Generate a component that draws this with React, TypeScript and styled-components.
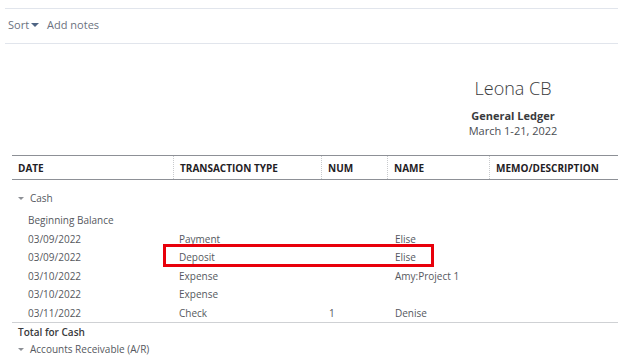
import React from "react";
import styled, { createGlobalStyle } from "styled-components";

const Global = createGlobalStyle`
  html, body { margin: 0; padding: 0; background: #fff; overflow: hidden; }
  body { font-family: "Open Sans", "Noto Sans", sans-serif; color: #393a3d; }
`;

const Page = styled.div`
  width: 618px;
  height: 359px;
  overflow: hidden;
  padding-top: 8px;
  box-sizing: border-box;
`;

const Toolbar = styled.div`
  margin-left: 5px;
  border-top: 1px solid #e1e5ec;
  border-bottom: 1px solid #e1e5ec;
  display: flex;
  align-items: center;
  gap: 8px;
  padding: 0 0 4px 3px;
  height: 30px;
  font-size: 11px;
  color: #6b7280;
`;

const SortButton = styled.span`
  display: inline-flex;
  align-items: center;
  gap: 2px;
`;

const Caret = styled.span`
  width: 0;
  height: 0;
  border-left: 4px solid transparent;
  border-right: 4px solid transparent;
  border-top: 4px solid #4f6584;
  margin-top: 1px;
`;

const ReportHead = styled.div`
  display: flex;
  justify-content: flex-end;
  padding-right: 5px;
  margin-top: 32px;
`;

const HeadBlock = styled.div`
  width: 200px;
  text-align: center;
`;

const Company = styled.div`
  font-size: 18px;
  font-weight: 300;
  color: #393a3d;
  line-height: 24px;
`;

const ReportName = styled.div`
  margin-top: 8px;
  font-size: 11px;
  font-weight: 700;
  color: #393a3d;
  line-height: 15px;
`;

const Period = styled.div`
  font-size: 11px;
  color: #4a4d52;
  line-height: 15px;
`;

const Table = styled.div`
  margin: 17px 0 0 12px;
`;

const cols = "161px 148px 66px 102px 1fr";

const HeaderRow = styled.div`
  display: grid;
  grid-template-columns: ${cols};
  border-top: 1px solid #8d9096;
  border-bottom: 1px solid #8d9096;
  height: 23px;
`;

const HeadCell = styled.div<{ $first?: boolean }>`
  display: flex;
  align-items: center;
  padding-left: 6px;
  border-left: ${(p) => (p.$first ? "none" : "1px dotted #c8cacd")};
  font-size: 10px;
  font-weight: 700;
  color: #1f2125;
`;

const Body = styled.div`
  padding-top: 9px;
`;

const GroupRow = styled.div`
  height: 18px;
  display: flex;
  align-items: center;
  gap: 6px;
  padding-left: 6px;
  font-size: 10px;
  color: #55585e;
`;

const SmallCaret = styled.span`
  width: 0;
  height: 0;
  border-left: 3px solid transparent;
  border-right: 3px solid transparent;
  border-top: 3px solid #8d9096;
`;

const Spacer = styled.div<{ $h: number }>`
  height: ${(p) => p.$h}px;
`;

const DataRow = styled.div<{ $last?: boolean }>`
  display: grid;
  grid-template-columns: ${cols};
  height: 18.5px;
  align-items: center;
  font-size: 10px;
  color: #55585e;
  border-bottom: ${(p) => (p.$last ? "1px solid #cfd1d4" : "none")};
`;

const Cell = styled.div<{ $indent?: number }>`
  padding-left: ${(p) => p.$indent ?? 6}px;
  white-space: nowrap;
`;

const TotalRow = styled.div`
  height: 17px;
  display: flex;
  align-items: center;
  padding-left: 6px;
  font-size: 10px;
  font-weight: 600;
  color: #393a3d;
`;

const Highlight = styled.div`
  position: absolute;
  left: 163px;
  top: 244px;
  width: 271px;
  height: 23px;
  box-sizing: border-box;
  border: 3px solid #e8000b;
  pointer-events: none;
`;

const Stage = styled.div`
  position: relative;
  width: 618px;
  height: 359px;
  overflow: hidden;
`;

type Txn = { date: string; type: string; num: string; name: string };

const rows: Txn[] = [
  { date: "03/09/2022", type: "Payment", num: "", name: "Elise" },
  { date: "03/09/2022", type: "Deposit", num: "", name: "Elise" },
  { date: "03/10/2022", type: "Expense", num: "", name: "Amy:Project 1" },
  { date: "03/10/2022", type: "Expense", num: "", name: "" },
  { date: "03/11/2022", type: "Check", num: "1", name: "Denise" },
];

export default function App() {
  return (
    <Stage>
      <Global />
      <Page>
        <Toolbar>
          <SortButton>
            Sort <Caret />
          </SortButton>
          <span>Add notes</span>
        </Toolbar>
        <ReportHead>
          <HeadBlock>
            <Company>Leona CB</Company>
            <ReportName>General Ledger</ReportName>
            <Period>March 1-21, 2022</Period>
          </HeadBlock>
        </ReportHead>
        <Table>
          <HeaderRow>
            <HeadCell $first>DATE</HeadCell>
            <HeadCell>TRANSACTION TYPE</HeadCell>
            <HeadCell>NUM</HeadCell>
            <HeadCell>NAME</HeadCell>
            <HeadCell>MEMO/DESCRIPTION</HeadCell>
          </HeaderRow>
          <Body>
            <GroupRow>
              <SmallCaret />
              Cash
            </GroupRow>
            <Spacer $h={4} />
            <DataRow>
              <Cell $indent={16}>Beginning Balance</Cell>
            </DataRow>
            {rows.map((r, i) => (
              <DataRow key={i} $last={i === rows.length - 1}>
                <Cell $indent={16}>{r.date}</Cell>
                <Cell>{r.type}</Cell>
                <Cell $indent={8}>{r.num}</Cell>
                <Cell $indent={8}>{r.name}</Cell>
                <Cell />
              </DataRow>
            ))}
            <TotalRow>Total for Cash</TotalRow>
            <GroupRow>
              <SmallCaret />
              Accounts Receivable (A/R)
            </GroupRow>
          </Body>
        </Table>
      </Page>
      <Highlight />
    </Stage>
  );
}
